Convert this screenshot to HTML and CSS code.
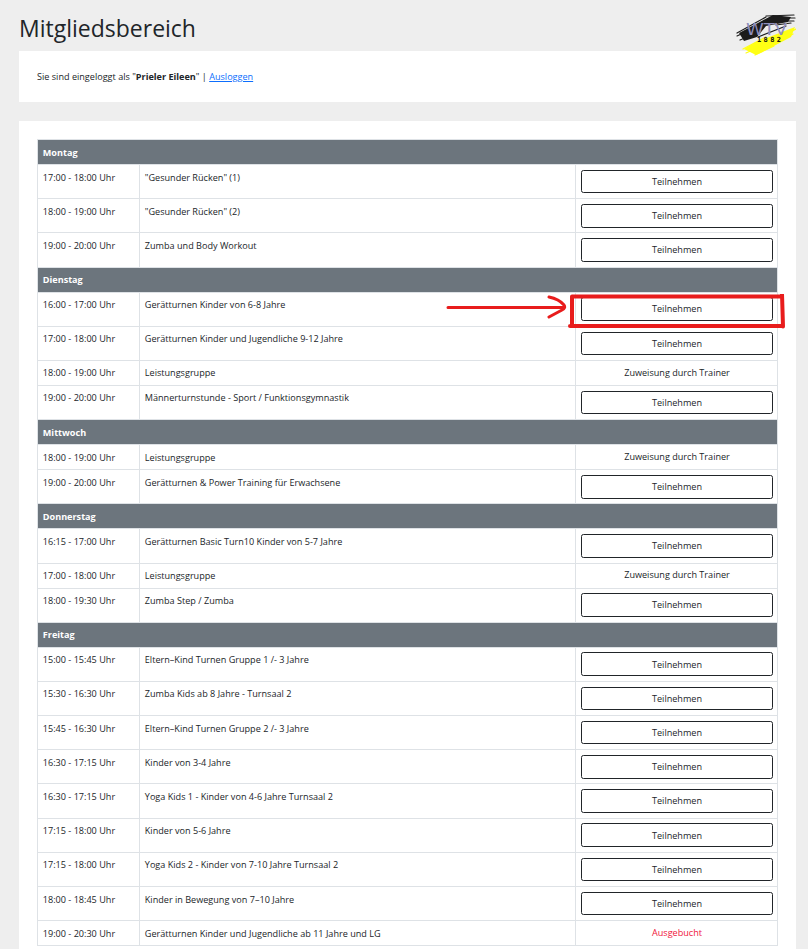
FILE: index.html
```html
<!DOCTYPE html>
<html lang="de">
<head>
<meta charset="utf-8">
<title>Mitgliedsbereich</title>
<link rel="stylesheet" href="styles.css">
</head>
<body>
<main class="page">
  <header class="head"><h1>Mitgliedsbereich</h1></header>
  <section class="card login"><p>Sie sind eingeloggt als "<b>Prieler Eileen</b>" | <a href="#">Ausloggen</a></p></section>
  <section class="card plan">
    <table>
      <colgroup><col class="c1"><col class="c2"><col class="c3"></colgroup>
      <tbody>
        <tr class="day"><th colspan="3">Montag</th></tr>
        <tr><td>17:00 - 18:00 Uhr</td><td>"Gesunder Rücken" (1)</td><td class="act"><button>Teilnehmen</button></td></tr>
        <tr><td>18:00 - 19:00 Uhr</td><td>"Gesunder Rücken" (2)</td><td class="act"><button>Teilnehmen</button></td></tr>
        <tr><td>19:00 - 20:00 Uhr</td><td>Zumba und Body Workout</td><td class="act"><button>Teilnehmen</button></td></tr>
        <tr class="day"><th colspan="3">Dienstag</th></tr>
        <tr><td>16:00 - 17:00 Uhr</td><td>Gerätturnen Kinder von 6-8 Jahre</td><td class="act"><button>Teilnehmen</button></td></tr>
        <tr><td>17:00 - 18:00 Uhr</td><td>Gerätturnen Kinder und Jugendliche 9-12 Jahre</td><td class="act"><button>Teilnehmen</button></td></tr>
        <tr><td>18:00 - 19:00 Uhr</td><td>Leistungsgruppe</td><td class="act">Zuweisung durch Trainer</td></tr>
        <tr><td>19:00 - 20:00 Uhr</td><td>Männerturnstunde - Sport / Funktionsgymnastik</td><td class="act"><button>Teilnehmen</button></td></tr>
        <tr class="day"><th colspan="3">Mittwoch</th></tr>
        <tr><td>18:00 - 19:00 Uhr</td><td>Leistungsgruppe</td><td class="act">Zuweisung durch Trainer</td></tr>
        <tr><td>19:00 - 20:00 Uhr</td><td>Gerätturnen &amp; Power Training für Erwachsene</td><td class="act"><button>Teilnehmen</button></td></tr>
        <tr class="day"><th colspan="3">Donnerstag</th></tr>
        <tr><td>16:15 - 17:00 Uhr</td><td>Gerätturnen Basic Turn10 Kinder von 5-7 Jahre</td><td class="act"><button>Teilnehmen</button></td></tr>
        <tr><td>17:00 - 18:00 Uhr</td><td>Leistungsgruppe</td><td class="act">Zuweisung durch Trainer</td></tr>
        <tr><td>18:00 - 19:30 Uhr</td><td>Zumba Step / Zumba</td><td class="act"><button>Teilnehmen</button></td></tr>
        <tr class="day"><th colspan="3">Freitag</th></tr>
        <tr><td>15:00 - 15:45 Uhr</td><td>Eltern–Kind Turnen Gruppe 1 /- 3 Jahre</td><td class="act"><button>Teilnehmen</button></td></tr>
        <tr><td>15:30 - 16:30 Uhr</td><td>Zumba Kids ab 8 Jahre - Turnsaal 2</td><td class="act"><button>Teilnehmen</button></td></tr>
        <tr><td>15:45 - 16:30 Uhr</td><td>Eltern–Kind Turnen Gruppe 2 /- 3 Jahre</td><td class="act"><button>Teilnehmen</button></td></tr>
        <tr><td>16:30 - 17:15 Uhr</td><td>Kinder von 3-4 Jahre</td><td class="act"><button>Teilnehmen</button></td></tr>
        <tr><td>16:30 - 17:15 Uhr</td><td>Yoga Kids 1 - Kinder von 4-6 Jahre Turnsaal 2</td><td class="act"><button>Teilnehmen</button></td></tr>
        <tr><td>17:15 - 18:00 Uhr</td><td>Kinder von 5-6 Jahre</td><td class="act"><button>Teilnehmen</button></td></tr>
        <tr><td>17:15 - 18:00 Uhr</td><td>Yoga Kids 2 - Kinder von 7-10 Jahre Turnsaal 2</td><td class="act"><button>Teilnehmen</button></td></tr>
        <tr><td>18:00 - 18:45 Uhr</td><td>Kinder in Bewegung von 7–10 Jahre</td><td class="act"><button>Teilnehmen</button></td></tr>
        <tr><td>19:00 - 20:30 Uhr</td><td>Gerätturnen Kinder und Jugendliche ab 11 Jahre und LG</td><td class="act full">Ausgebucht</td></tr>
      </tbody>
    </table>
  </section>
</main>
<svg class="logo" viewBox="0 0 60 44" width="60" height="44" aria-label="WTV 1882">
  <path class="ink-y" d="M8 37 L20 30 L59 15 L55 25 L36 35 L20 43 Z"/>
  <g class="streak-y">
    <path d="M7 37 L30 25"/><path d="M34 30 L60 17"/><path d="M36 33 L57 22"/><path d="M10 41 L26 34"/><path d="M19 43 L38 34"/>
  </g>
  <path class="ink-k" d="M3 21 L37 3 L55 5 L52 10 L30 14 L21 25 L8 29 Z"/>
  <g class="streak-k">
    <path d="M1 21 L30 5"/><path d="M1 24 L20 15"/><path d="M4 28 L16 23"/><path d="M30 4 L58 3"/><path d="M38 6 L59 6"/><path d="M40 9 L58 9"/><path d="M40 13 L55 11"/><path d="M22 25 L50 14"/>
  </g>
  <text class="wtv" x="10" y="23" textLength="41" lengthAdjust="spacingAndGlyphs">WTV</text>
  <text class="year" x="21" y="30" textLength="24">1882</text>
</svg>
<svg class="mark" viewBox="0 0 350 40" width="350" height="40">
  <g class="pen">
    <path class="thin" d="M3 13.5 H118 M104 3 Q114 5 119 11 Q121 14 117 16 L104 23"/>
    <path class="thick" d="M127 2.5 H337 M337 0 L338 32.5 M125 32 H338 M127 2.5 V32"/>
  </g>
</svg>
</body>
</html>
```
FILE: styles.css
```css
* { box-sizing: border-box; }
html, body { margin: 0; padding: 0; }
body {
  background: #eeeeee;
  color: #212529;
  font-family: "Open Sans", "Noto Sans", sans-serif;
  font-size: 9.1px;
  line-height: 14.4px;
  height: 949px;
  overflow: hidden;
  position: relative;
}
.page { padding: 0 12px 0 19px; }
.head { height: 51px; padding-top: 14px; }
h1 { margin: 0; font-size: 23px; line-height: 29px; font-weight: 400; }
.card { background: #fff; }
.login { height: 51px; padding: 18.6px 18px 0; margin-bottom: 19px; }
.login p { margin: 0; }
.login a { color: #0d6efd; }
.plan { padding: 18px; }
table { width: 740px; border-collapse: collapse; table-layout: fixed; }
.c1 { width: 102px; }
.c2 { width: 436px; }
.c3 { width: 202px; }
td, th { border: 1px solid #dee2e6; padding: 5.5px 4.8px 4.1px; vertical-align: top; text-align: left; font-weight: 400; }
th { background: #6c757d; color: #fff; font-weight: 700; }
td.act { text-align: center; padding: 4.8px 4px 4.8px 5px; }
td.full { color: #f0143c; }
button {
  display: block;
  width: 100%;
  height: 23.6px;
  padding: 1px 0 0;
  font: inherit;
  color: #212529;
  background: #fff;
  border: 1px solid #212529;
  border-radius: 2.4px;
}
.logo { position: absolute; left: 736px; top: 12px; }
.ink-y { fill: #ffff14; }
.ink-k { fill: #1c1c1c; }
.streak-y, .streak-k { fill: none; stroke-linecap: round; stroke-width: 1.2; }
.streak-y { stroke: #ffff14; }
.streak-k { stroke: #1c1c1c; }
.wtv { font-family: "DejaVu Sans", sans-serif; font-size: 15px; fill: #8f8fbd; }
.year { font-family: "DejaVu Sans Mono", monospace; font-size: 7px; font-weight: 700; fill: #111; }
.mark { position: absolute; left: 445px; top: 294px; }
.pen { fill: none; stroke: #e81c1c; stroke-linecap: round; stroke-linejoin: round; }
.thin { stroke-width: 3; }
.thick { stroke-width: 4; }
```
